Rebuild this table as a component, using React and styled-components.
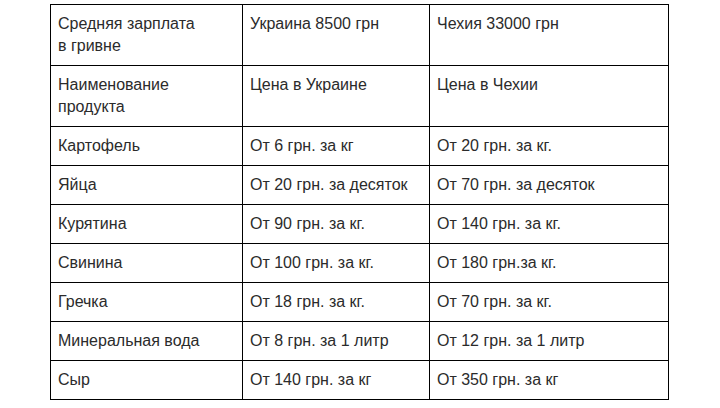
import React from "react";
import styled, { createGlobalStyle } from "styled-components";

const GlobalStyle = createGlobalStyle`
  html, body {
    margin: 0;
    padding: 0;
    background: #ffffff;
  }
  body {
    font-family: "Liberation Sans", Arial, sans-serif;
  }
`;

const Page = styled.div`
  padding: 4px 0 0 50px;
  background: #ffffff;
  width: 720px;
  height: 408px;
  box-sizing: border-box;
`;

const Grid = styled.div`
  display: grid;
  grid-template-columns: 191px 186px 238px;
  gap: 1px;
  padding: 1px;
  background: #000000;
  width: max-content;
`;

const Cell = styled.div`
  background: #ffffff;
  padding: 8px 7px 8px 7px;
  font-size: 16px;
  line-height: 22px;
  color: #2b2b2b;
  white-space: nowrap;
`;

const rows = [
  [["Средняя зарплата", "в гривне"], ["Украина 8500 грн"], ["Чехия 33000 грн"]],
  [["Наименование", "продукта"], ["Цена в Украине"], ["Цена в Чехии"]],
  [["Картофель"], ["От 6 грн. за кг"], ["От 20 грн. за кг."]],
  [["Яйца"], ["От 20 грн. за десяток"], ["От 70 грн. за десяток"]],
  [["Курятина"], ["От 90 грн. за кг."], ["От 140 грн. за кг."]],
  [["Свинина"], ["От 100 грн. за кг."], ["От 180 грн.за кг."]],
  [["Гречка"], ["От 18 грн. за кг."], ["От 70 грн. за кг."]],
  [["Минеральная вода"], ["От 8 грн. за 1 литр"], ["От 12 грн. за 1 литр"]],
  [["Сыр"], ["От 140 грн. за кг"], ["От 350 грн. за кг"]],
];

export default function App() {
  return (
    <>
      <GlobalStyle />
      <Page>
        <Grid>
          {rows.map((row, ri) =>
            row.map((lines, ci) => (
              <Cell key={`${ri}-${ci}`}>
                {lines.map((l, li) => (
                  <React.Fragment key={li}>
                    {li > 0 && <br />}
                    {l}
                  </React.Fragment>
                ))}
              </Cell>
            ))
          )}
        </Grid>
      </Page>
    </>
  );
}
